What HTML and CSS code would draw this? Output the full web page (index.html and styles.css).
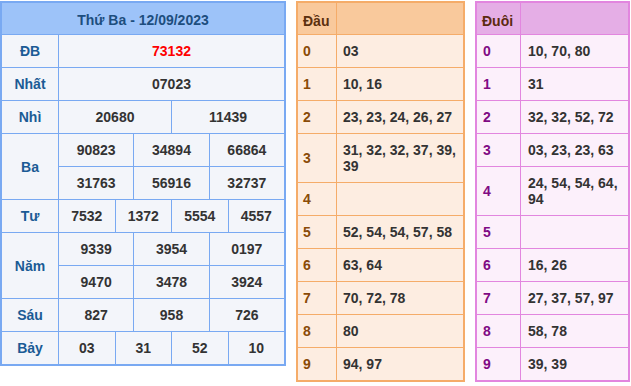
FILE: index.html
```html
<!DOCTYPE html>
<html lang="vi">
<head>
    <meta charset="UTF-8">
    <title>Kết quả xổ số</title>
    <link rel="stylesheet" href="styles.css">
</head>
<body>
<div class="board">
    <div class="kq">
        <div class="kq-head">Thứ Ba - 12/09/2023</div>

        <div class="lbl">ĐB</div>
        <div class="num c12 red">73132</div>

        <div class="lbl">Nhất</div>
        <div class="num c12">07023</div>

        <div class="lbl">Nhì</div>
        <div class="num c6">20680</div>
        <div class="num c6">11439</div>

        <div class="lbl r2">Ba</div>
        <div class="num c4">90823</div>
        <div class="num c4">34894</div>
        <div class="num c4">66864</div>
        <div class="num c4">31763</div>
        <div class="num c4">56916</div>
        <div class="num c4">32737</div>

        <div class="lbl">Tư</div>
        <div class="num c3">7532</div>
        <div class="num c3">1372</div>
        <div class="num c3">5554</div>
        <div class="num c3">4557</div>

        <div class="lbl r2">Năm</div>
        <div class="num c4">9339</div>
        <div class="num c4">3954</div>
        <div class="num c4">0197</div>
        <div class="num c4">9470</div>
        <div class="num c4">3478</div>
        <div class="num c4">3924</div>

        <div class="lbl">Sáu</div>
        <div class="num c4">827</div>
        <div class="num c4">958</div>
        <div class="num c4">726</div>

        <div class="lbl">Bảy</div>
        <div class="num c3">03</div>
        <div class="num c3">31</div>
        <div class="num c3">52</div>
        <div class="num c3">10</div>
    </div>

    <div class="loto dau">
        <div class="lt-head">Đầu</div><div class="lt-head"></div>
        <div class="lt-key">0</div><div class="lt-val">03</div>
        <div class="lt-key">1</div><div class="lt-val">10, 16</div>
        <div class="lt-key">2</div><div class="lt-val">23, 23, 24, 26, 27</div>
        <div class="lt-key">3</div><div class="lt-val">31, 32, 32, 37, 39, 39</div>
        <div class="lt-key">4</div><div class="lt-val"></div>
        <div class="lt-key">5</div><div class="lt-val">52, 54, 54, 57, 58</div>
        <div class="lt-key">6</div><div class="lt-val">63, 64</div>
        <div class="lt-key">7</div><div class="lt-val">70, 72, 78</div>
        <div class="lt-key">8</div><div class="lt-val">80</div>
        <div class="lt-key">9</div><div class="lt-val">94, 97</div>
    </div>

    <div class="loto duoi">
        <div class="lt-head">Đuôi</div><div class="lt-head"></div>
        <div class="lt-key">0</div><div class="lt-val">10, 70, 80</div>
        <div class="lt-key">1</div><div class="lt-val">31</div>
        <div class="lt-key">2</div><div class="lt-val">32, 32, 52, 72</div>
        <div class="lt-key">3</div><div class="lt-val">03, 23, 23, 63</div>
        <div class="lt-key">4</div><div class="lt-val">24, 54, 54, 64, 94</div>
        <div class="lt-key">5</div><div class="lt-val"></div>
        <div class="lt-key">6</div><div class="lt-val">16, 26</div>
        <div class="lt-key">7</div><div class="lt-val">27, 37, 57, 97</div>
        <div class="lt-key">8</div><div class="lt-val">58, 78</div>
        <div class="lt-key">9</div><div class="lt-val">39, 39</div>
    </div>
</div>
</body>
</html>
```

FILE: styles.css
```css
body {
    margin: 0;
    background: #fff;
    font-family: "Liberation Sans", Arial, sans-serif;
    font-size: 14px;
    font-weight: bold;
    color: #333;
}

div.board {
    display: flex;
    align-items: flex-start;
    gap: 10px;
    padding-top: 1px;
}

/* bang ket qua */
div.kq {
    width: 286px;
    box-sizing: border-box;
    display: grid;
    grid-template-columns: 56px repeat(12, 1fr);
    grid-template-rows: 31px repeat(10, 32px);
    gap: 1px;
    border: 2px solid #79a9f2;
    background: #79a9f2;
}

div.kq > div {
    display: flex;
    align-items: center;
    justify-content: center;
    background: #f3f5fa;
}

div.kq-head {
    grid-column: span 13;
    padding-top: 3px;
    background: #9dc3f9 !important;
    color: #1d4e7e;
}

div.lbl {
    color: #1b5b95;
}

div.r2 { grid-row: span 2; }
div.c12 { grid-column: span 12; }
div.c6 { grid-column: span 6; }
div.c4 { grid-column: span 4; }
div.c3 { grid-column: span 3; }

div.red {
    color: #f00;
}

/* bang loto */
div.loto {
    box-sizing: border-box;
    display: grid;
    gap: 1px;
    border: 2px solid;
    line-height: 16px;
}

div.loto > div {
    padding: 8px 6px;
}

div.lt-head {
    height: 31px;
    box-sizing: border-box;
    padding: 10px 5px 5px !important;
}

div.lt-key {
    display: flex;
    align-items: center;
    padding-left: 5px !important;
}

div.dau {
    width: 169px;
    grid-template-columns: 38px 1fr;
    border-color: #f5ac69;
    background: #f5ac69;
}

div.dau > div { background: #fdede1; }
div.dau div.lt-head { background: #f9c99c; color: #5c300f; }
div.dau div.lt-key { color: #8a4b08; }

div.duoi {
    width: 155px;
    grid-template-columns: 43px 1fr;
    border-color: #e286df;
    background: #e286df;
}

div.duoi > div { background: #fcf0fb; }
div.duoi div.lt-head { background: #e5aee6; color: #5c2a10; }
div.duoi div.lt-key { color: #800a84; padding-left: 6px !important; }
div.duoi div.lt-val { padding-left: 7px; }
```
